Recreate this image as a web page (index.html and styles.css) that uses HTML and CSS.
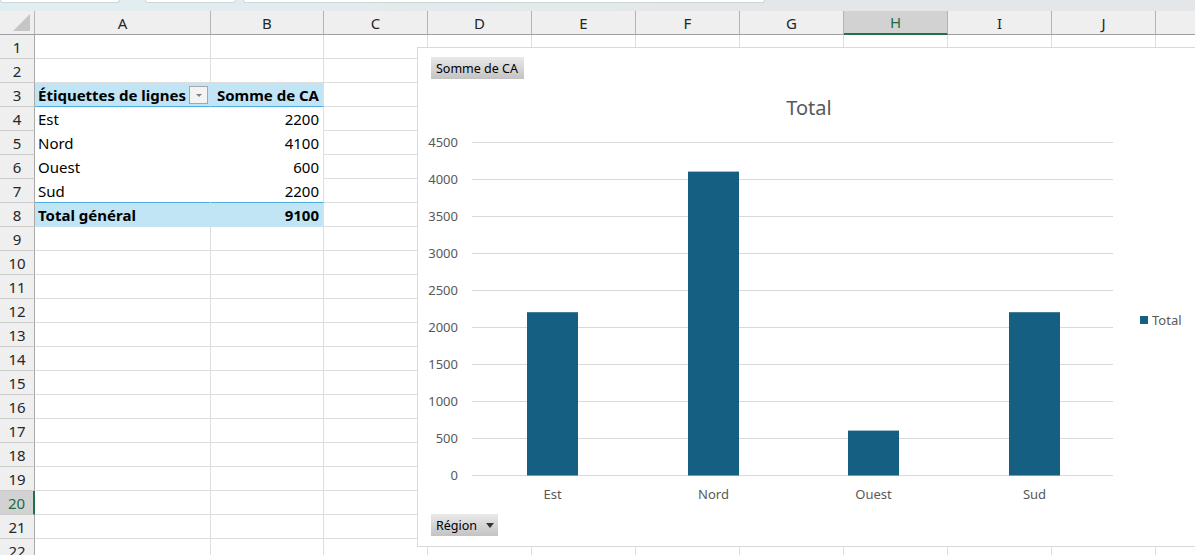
FILE: index.html
```html
<!DOCTYPE html>
<html lang="fr">
<head>
    <meta charset="UTF-8">
    <meta name="viewport" content="width=device-width, initial-scale=1.0">
    <title>Tableau croisé - CA par région</title>
    <link rel="stylesheet" href="styles.css">
</head>
<body>
    <div class="topbar">
        <div class="tab tab-1"></div>
        <div class="tab tab-2"></div>
        <div class="tab tab-3"></div>
    </div>

    <div class="sheet">
        <div class="row col-head">
            <div class="corner"><span class="corner-mark"></span></div>
            <div>A</div><div>B</div><div>C</div><div>D</div><div>E</div><div>F</div>
            <div>G</div><div class="selected">H</div><div>I</div><div>J</div><div></div>
        </div>

        <div class="row"><div class="rh">1</div><div></div><div></div><div></div><div></div><div></div><div></div><div></div><div></div><div></div><div></div><div></div></div>
        <div class="row"><div class="rh">2</div><div></div><div></div><div></div><div></div><div></div><div></div><div></div><div></div><div></div><div></div><div></div></div>
        <div class="row pivot pivot-head">
            <div class="rh">3</div>
            <div class="pa"><span>Étiquettes de lignes</span><span class="filter-btn"></span></div>
            <div class="pb">Somme de CA</div>
            <div></div><div></div><div></div><div></div><div></div><div></div><div></div><div></div><div></div>
        </div>
        <div class="row pivot"><div class="rh">4</div><div class="pa">Est</div><div class="pb">2200</div><div></div><div></div><div></div><div></div><div></div><div></div><div></div><div></div><div></div></div>
        <div class="row pivot"><div class="rh">5</div><div class="pa">Nord</div><div class="pb">4100</div><div></div><div></div><div></div><div></div><div></div><div></div><div></div><div></div><div></div></div>
        <div class="row pivot"><div class="rh">6</div><div class="pa">Ouest</div><div class="pb">600</div><div></div><div></div><div></div><div></div><div></div><div></div><div></div><div></div><div></div></div>
        <div class="row pivot pivot-last"><div class="rh">7</div><div class="pa">Sud</div><div class="pb">2200</div><div></div><div></div><div></div><div></div><div></div><div></div><div></div><div></div><div></div></div>
        <div class="row pivot pivot-total"><div class="rh">8</div><div class="pa">Total général</div><div class="pb">9100</div><div></div><div></div><div></div><div></div><div></div><div></div><div></div><div></div><div></div></div>
        <div class="row"><div class="rh">9</div><div></div><div></div><div></div><div></div><div></div><div></div><div></div><div></div><div></div><div></div><div></div></div>
        <div class="row"><div class="rh">10</div><div></div><div></div><div></div><div></div><div></div><div></div><div></div><div></div><div></div><div></div><div></div></div>
        <div class="row"><div class="rh">11</div><div></div><div></div><div></div><div></div><div></div><div></div><div></div><div></div><div></div><div></div><div></div></div>
        <div class="row"><div class="rh">12</div><div></div><div></div><div></div><div></div><div></div><div></div><div></div><div></div><div></div><div></div><div></div></div>
        <div class="row"><div class="rh">13</div><div></div><div></div><div></div><div></div><div></div><div></div><div></div><div></div><div></div><div></div><div></div></div>
        <div class="row"><div class="rh">14</div><div></div><div></div><div></div><div></div><div></div><div></div><div></div><div></div><div></div><div></div><div></div></div>
        <div class="row"><div class="rh">15</div><div></div><div></div><div></div><div></div><div></div><div></div><div></div><div></div><div></div><div></div><div></div></div>
        <div class="row"><div class="rh">16</div><div></div><div></div><div></div><div></div><div></div><div></div><div></div><div></div><div></div><div></div><div></div></div>
        <div class="row"><div class="rh">17</div><div></div><div></div><div></div><div></div><div></div><div></div><div></div><div></div><div></div><div></div><div></div></div>
        <div class="row"><div class="rh">18</div><div></div><div></div><div></div><div></div><div></div><div></div><div></div><div></div><div></div><div></div><div></div></div>
        <div class="row"><div class="rh">19</div><div></div><div></div><div></div><div></div><div></div><div></div><div></div><div></div><div></div><div></div><div></div></div>
        <div class="row"><div class="rh selected">20</div><div></div><div></div><div></div><div></div><div></div><div></div><div></div><div></div><div></div><div></div><div></div></div>
        <div class="row"><div class="rh">21</div><div></div><div></div><div></div><div></div><div></div><div></div><div></div><div></div><div></div><div></div><div></div></div>
        <div class="row"><div class="rh">22</div><div></div><div></div><div></div><div></div><div></div><div></div><div></div><div></div><div></div><div></div><div></div></div>

        <!-- pivot chart floating over the cells -->
        <div class="chart">
            <svg class="chart-plot" width="790" height="500" viewBox="0 0 790 500">
                <text class="chart-title" x="392" y="68" text-anchor="middle">Total</text>

                <g class="grid">
                    <line x1="55" y1="95.5" x2="696" y2="95.5"/>
                    <line x1="55" y1="132.5" x2="696" y2="132.5"/>
                    <line x1="55" y1="169.5" x2="696" y2="169.5"/>
                    <line x1="55" y1="206.5" x2="696" y2="206.5"/>
                    <line x1="55" y1="243.5" x2="696" y2="243.5"/>
                    <line x1="55" y1="280.5" x2="696" y2="280.5"/>
                    <line x1="55" y1="317.5" x2="696" y2="317.5"/>
                    <line x1="55" y1="354.5" x2="696" y2="354.5"/>
                    <line x1="55" y1="391.5" x2="696" y2="391.5"/>
                    <line x1="55" y1="428.5" x2="696" y2="428.5"/>
                </g>

                <g class="axis-label" text-anchor="end">
                    <text x="41" y="100">4500</text>
                    <text x="41" y="137">4000</text>
                    <text x="41" y="174">3500</text>
                    <text x="41" y="211">3000</text>
                    <text x="41" y="248">2500</text>
                    <text x="41" y="285">2000</text>
                    <text x="41" y="322">1500</text>
                    <text x="41" y="359">1000</text>
                    <text x="41" y="396">500</text>
                    <text x="41" y="433">0</text>
                </g>

                <g class="bars">
                    <rect x="110" y="265.2" width="51" height="163.3"/>
                    <rect x="271" y="124.6" width="51" height="303.9"/>
                    <rect x="431" y="383.6" width="51" height="44.9"/>
                    <rect x="592" y="265.2" width="51" height="163.3"/>
                </g>

                <g class="axis-label" text-anchor="middle">
                    <text x="135.5" y="452">Est</text>
                    <text x="296.5" y="452">Nord</text>
                    <text x="456.5" y="452">Ouest</text>
                    <text x="617.5" y="452">Sud</text>
                </g>

                <rect class="legend-key" x="723" y="269" width="8" height="8"/>
                <text class="axis-label" x="735" y="278">Total</text>
            </svg>

            <div class="field-btn value-btn">Somme de CA</div>
            <div class="field-btn axis-btn">Région <span class="drop"></span></div>
        </div>
    </div>
</body>
</html>
```

FILE: styles.css
```css
body {
    margin: 0;
    padding: 0;
    overflow: hidden;
    background-color: #fff;
    font-family: "Noto Sans", Lato, sans-serif;
    color: #000;
}

.topbar {
    height: 11px;
    display: flex;
    align-items: flex-start;
    background: linear-gradient(to right, #e1eef0, #e4e7ea 60%);
}

.tab {
    height: 2px;
    background-color: #fff;
    border: 1px solid #cfd7db;
    border-top: none;
    border-radius: 0 0 6px 6px;
}

.tab-1 {
    width: 118px;
}

.tab-2 {
    width: 89px;
    margin-left: 25px;
}

.tab-3 {
    width: 520px;
    margin-left: 7px;
}

.sheet {
    position: relative;
    width: 1260px;
}

.row {
    display: grid;
    grid-template-columns: 35px 176px 113px repeat(9, 104px);
    height: 24px;
}

.row > div {
    box-sizing: border-box;
    height: 24px;
    border-right: 1px solid #dedede;
    border-bottom: 1px solid #dedede;
    font-size: 15px;
    display: flex;
    align-items: center;
    white-space: nowrap;
}

/* column letters */
.col-head > div {
    background-color: #efefef;
    border-right-color: #b4b4b4;
    border-bottom-color: #9f9f9f;
    justify-content: center;
    color: #262626;
}

.col-head > div.selected {
    background-color: #d2d2d2;
    color: #1c6a46;
    border-bottom: 2px solid #217346;
}

.corner {
    position: relative;
}

.corner-mark {
    position: absolute;
    right: 4px;
    bottom: 3px;
    width: 0;
    height: 0;
    border-left: 17px solid transparent;
    border-bottom: 17px solid #c6c6c6;
}

/* row numbers */
.row > .rh {
    background-color: #efefef;
    border-right-color: #a9a9a9;
    border-bottom-color: #cbcbcb;
    justify-content: center;
    color: #262626;
}

.row > .rh.selected {
    background-color: #d2d2d2;
    color: #1c6a46;
    border-right: 2px solid #217346;
}

/* pivot table */
.pivot > .pa {
    padding-left: 3px;
    border-right-color: transparent;
    border-bottom-color: #fff;
}

.pivot > .pb {
    justify-content: flex-end;
    padding-right: 4px;
    border-bottom-color: #fff;
}

.pivot-head > .pa,
.pivot-head > .pb,
.pivot-total > .pa,
.pivot-total > .pb {
    background-color: #c1e5f5;
    font-weight: bold;
}

.pivot-head > .pa {
    justify-content: space-between;
    padding-right: 2px;
}

.pivot-head > .pa,
.pivot-head > .pb,
.pivot-last > .pa,
.pivot-last > .pb {
    border-bottom-color: #4daee2;
}

.pivot-head > .pa,
.pivot-total > .pa {
    border-right-color: #c1e5f5;
}

.pivot-total > .pa,
.pivot-total > .pb {
    border-bottom-color: #c1e5f5;
}

.filter-btn {
    box-sizing: border-box;
    width: 19px;
    height: 18px;
    margin-top: 1px;
    border: 1px solid #a6a6a6;
    background-color: #f3f3f3;
    position: relative;
}

.filter-btn::after {
    content: "";
    position: absolute;
    left: 6px;
    top: 7px;
    border-left: 3px solid transparent;
    border-right: 3px solid transparent;
    border-top: 3px solid #808080;
}

/* chart */
.chart {
    position: absolute;
    left: 417px;
    top: 36px;
    width: 790px;
    height: 500px;
    box-sizing: border-box;
    background-color: #fff;
    border: 1px solid #d9d9d9;
    font-family: "Noto Sans", "Open Sans", sans-serif;
}

.chart-plot {
    position: absolute;
    left: -1px;
    top: -1px;
}

.chart-title {
    font-size: 20px;
    fill: #595959;
}

.grid line {
    stroke: #d9d9d9;
    stroke-width: 1;
}

.axis-label {
    font-size: 13px;
    fill: #595959;
}

.bars rect,
.legend-key {
    fill: #156082;
}

.field-btn {
    position: absolute;
    height: 22px;
    box-sizing: border-box;
    display: flex;
    align-items: center;
    padding: 0 5px;
    font-size: 12.5px;
    color: #000;
    background: linear-gradient(to bottom, #e9e9e9, #c3c3c3);
}

.value-btn {
    left: 13px;
    top: 9px;
    width: 93px;
}

.axis-btn {
    left: 13px;
    top: 466px;
    width: 67px;
}

.drop {
    margin-left: 9px;
    border-left: 4px solid transparent;
    border-right: 4px solid transparent;
    border-top: 5px solid #333;
}
```
